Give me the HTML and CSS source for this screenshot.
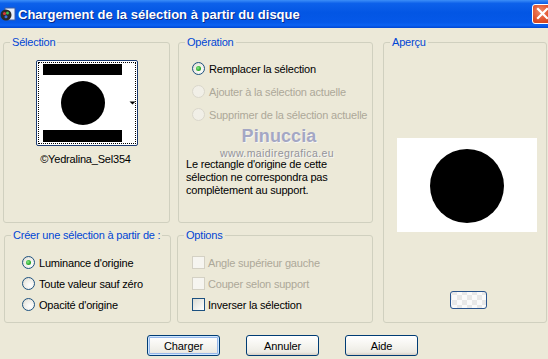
FILE: index.html
```html
<!DOCTYPE html>
<html lang="fr">
<head>
<meta charset="utf-8">
<title>Chargement de la sélection à partir du disque</title>
<link rel="stylesheet" href="styles.css">
</head>
<body>
<div class="window">
  <div class="titlebar">
    <svg class="app-icon" width="16" height="16" viewBox="0 0 16 16">
      <rect x="5" y="2" width="10" height="12" fill="#e8eef8" stroke="#3a5fa8" stroke-width="1"/>
      <circle cx="6" cy="9" r="5.5" fill="#2a2a2a"/>
      <circle cx="4.5" cy="7.5" r="1.6" fill="#d83a3a"/>
      <circle cx="7.5" cy="7" r="1.5" fill="#3fbf4f"/>
      <circle cx="6" cy="10.8" r="1.5" fill="#3a6fe0"/>
    </svg>
    <span class="title">Chargement de la sélection à partir du disque</span>
    <span class="close">
      <svg width="19" height="18" viewBox="0 0 19 18"><path d="M5 4 L14 13 M14 4 L5 13" stroke="#fff" stroke-width="2.2" stroke-linecap="square"/></svg>
    </span>
  </div>

  <div class="content">
    <fieldset class="group g-sel">
      <legend>Sélection</legend>
      <div class="thumb">
        <svg width="100" height="84" viewBox="0 0 100 84">
          <rect x="6" y="3" width="79" height="11" fill="#000"/>
          <rect x="6" y="69" width="79" height="12" fill="#000"/>
          <circle cx="46" cy="42" r="22" fill="#000"/>
          <path d="M92.5 40.5 L98.5 40.5 L95.5 43.5 Z" fill="#000"/>
        </svg>
      </div>
      <div class="thumb-label">©Yedralina_Sel354</div>
    </fieldset>

    <fieldset class="group g-op">
      <legend>Opération</legend>
      <div class="row"><span class="radio checked"></span><span>Remplacer la sélection</span></div>
      <div class="row disabled"><span class="radio"></span><span>Ajouter à la sélection actuelle</span></div>
      <div class="row disabled"><span class="radio"></span><span>Supprimer de la sélection actuelle</span></div>
      <p class="note">Le rectangle d'origine de cette sélection ne correspondra pas complètement au support.</p>
      <div class="watermark">
        <span class="wm-name">Pinuccia</span>
        <span class="wm-url">www.maidiregrafica.eu</span>
      </div>
    </fieldset>

    <fieldset class="group g-prev">
      <legend>Aperçu</legend>
      <div class="preview">
        <svg width="140" height="94" viewBox="0 0 140 94"><circle cx="70" cy="48" r="37" fill="#000"/></svg>
      </div>
      <div class="mini"></div>
    </fieldset>

    <fieldset class="group g-create">
      <legend>Créer une sélection à partir de :</legend>
      <div class="row"><span class="radio checked"></span><span>Luminance d'origine</span></div>
      <div class="row"><span class="radio"></span><span>Toute valeur sauf zéro</span></div>
      <div class="row"><span class="radio"></span><span>Opacité d'origine</span></div>
    </fieldset>

    <fieldset class="group g-options">
      <legend>Options</legend>
      <div class="row disabled"><span class="check"></span><span>Angle supérieur gauche</span></div>
      <div class="row disabled"><span class="check"></span><span>Couper selon support</span></div>
      <div class="row"><span class="check"></span><span>Inverser la sélection</span></div>
    </fieldset>
  </div>

  <div class="buttons">
    <button class="btn default">Charger</button>
    <button class="btn">Annuler</button>
    <button class="btn">Aide</button>
  </div>
</div>
</body>
</html>
```

FILE: styles.css
```css
html, body {
  margin: 0;
  padding: 0;
}
body {
  width: 548px;
  height: 359px;
  overflow: hidden;
  background: #ECE9D8;
  font-family: "Liberation Sans", Arial, sans-serif;
  font-size: 11px;
  letter-spacing: -0.2px;
  color: #000;
}

.titlebar {
  height: 28px;
  display: flex;
  align-items: center;
  overflow: hidden;
  background: linear-gradient(to bottom, #3C8EF8 0%, #0D61EA 12%, #0356E4 45%, #0558E8 80%, #0B62F2 90%, #0046D2 100%);
}
.app-icon {
  flex: none;
  margin: 0 2px 0 0;
}
.title {
  flex: 1;
  min-width: 0;
  color: #fff;
  font-weight: bold;
  font-size: 13px;
  letter-spacing: 0;
  text-shadow: 1px 1px 0 #0A2A8A;
  white-space: nowrap;
}
.close {
  flex: none;
  align-self: flex-start;
  margin-top: 4px;
  margin-right: -5px;
  width: 21px;
  height: 20px;
  box-sizing: border-box;
  border: 1px solid #fff;
  border-radius: 3px;
  background: radial-gradient(circle at 40% 35%, #F08A6A 0%, #E0522C 55%, #C43A12 100%);
  overflow: hidden;
}
.close svg { display: block; }

.content {
  display: grid;
  grid-template-columns: 175px 205px 165px;
  grid-template-rows: 187px 94px;
  row-gap: 6px;
  padding: 8px 0 0 3px;
}

.group {
  margin: 0;
  padding: 0;
  border: 1px solid #D0D0BF;
  border-radius: 3px;
  min-width: 0;
  box-sizing: border-box;
  position: relative;
  justify-self: start;
}
.group legend {
  color: #0046D5;
  padding: 0 2px;
  margin-left: 6px;
  line-height: 13px;
  font-size: 11px;
}

.g-sel { grid-column: 1; grid-row: 1; width: 167px; }
.g-op { grid-column: 2; grid-row: 1; width: 195px; }
.g-prev { grid-column: 3; grid-row: 1 / 3; width: 164px; }
.g-create { grid-column: 1; grid-row: 2; width: 167px; margin-left: 1px; }
.g-options { grid-column: 2; grid-row: 2; width: 196px; margin-left: -1px; }

.thumb {
  width: 102px;
  height: 86px;
  box-sizing: border-box;
  margin: 11px auto 0;
  border: 1px solid #1B3A70;
  border-radius: 2px;
  background: #fff;
  position: relative;
  outline: 1px dotted #000;
  outline-offset: -3px;
}
.thumb svg { display: block; }
.thumb-label {
  text-align: center;
  margin-top: 7px;
  line-height: 13px;
  padding-right: 2px;
}

.row {
  display: flex;
  align-items: center;
  gap: 4px;
  white-space: nowrap;
}
.row.disabled { color: #ACA899; }

.g-op .row { height: 23px; padding-left: 13px; }
.g-op .row:first-of-type { margin-top: 8px; }

.g-create .row { height: 21px; padding-left: 17px; }
.g-create .row:first-of-type { margin-top: 10px; }

.g-options .row { height: 21px; padding-left: 14px; gap: 3px; }
.g-options .row:first-of-type { margin-top: 10px; }

.radio {
  flex: none;
  width: 13px;
  height: 13px;
  box-sizing: border-box;
  border-radius: 50%;
  border: 1px solid #1C5180;
  background: radial-gradient(circle at 65% 65%, #FFFFFF 0%, #EDEBE4 60%, #D4D0C2 100%);
  position: relative;
}
.radio.checked::after {
  content: "";
  position: absolute;
  left: 3px;
  top: 3px;
  width: 5px;
  height: 5px;
  border-radius: 50%;
  background: radial-gradient(circle at 40% 40%, #8CEB8C 0%, #29A829 60%, #1B8A1B 100%);
}
.disabled .radio {
  border-color: #DAD7CB;
  background: #F1EFE7;
}

.check {
  flex: none;
  width: 13px;
  height: 13px;
  box-sizing: border-box;
  border: 1px solid #1C5180;
  background: linear-gradient(135deg, #DCDCD4 0%, #F2F2EE 60%, #FFFFFF 100%);
}
.disabled .check {
  border-color: #D4D1C4;
  background: #F6F5F0;
}

.note {
  margin: 32px 0 0 0;
  padding: 0 8px 0 7px;
  line-height: 13px;
}

.watermark {
  position: absolute;
  left: 30px;
  top: 79px;
  width: 136px;
  display: flex;
  flex-direction: column;
  align-items: center;
  pointer-events: none;
}
.wm-name {
  font-family: "Liberation Sans", Arial, sans-serif;
  font-weight: bold;
  font-size: 18px;
  line-height: 16px;
  letter-spacing: 0.1px;
  color: #A4A7C4;
  text-shadow: 1px 1px 0 #F7F6F2;
  margin-left: 4px;
}
.wm-url {
  font-size: 10.5px;
  line-height: 10px;
  letter-spacing: 0.4px;
  color: #93939A;
  text-shadow: 1px 1px 0 #F6F6F4;
  margin-top: 4px;
}

.preview {
  width: 140px;
  height: 94px;
  margin: 89px 0 0 13px;
  background: #fff;
}
.preview svg { display: block; }

.mini {
  width: 37px;
  height: 18px;
  box-sizing: border-box;
  margin: 59px 0 0 66px;
  border: 1px solid #2A5590;
  border-radius: 3px;
  background:
    repeating-conic-gradient(#FAFAFA 0 25%, #E8E8E8 0 50%) 6px 3px / 10px 10px;
}

.buttons {
  display: flex;
  gap: 26px;
  margin: 12px 0 0 147px;
}
.btn {
  width: 73px;
  height: 21px;
  padding: 0;
  box-sizing: border-box;
  border: 1px solid #003C74;
  border-radius: 3px;
  background: linear-gradient(to bottom, #FFFFFF 0%, #F5F4EF 50%, #ECEBE4 85%, #D6D0C5 100%);
  font-family: "Liberation Sans", Arial, sans-serif;
  font-size: 11px;
  letter-spacing: -0.1px;
  color: #000;
}
.btn.default {
  box-shadow: inset 0 0 0 1px #CEE7FF, inset 0 0 0 2px #98B8EA;
}
```
